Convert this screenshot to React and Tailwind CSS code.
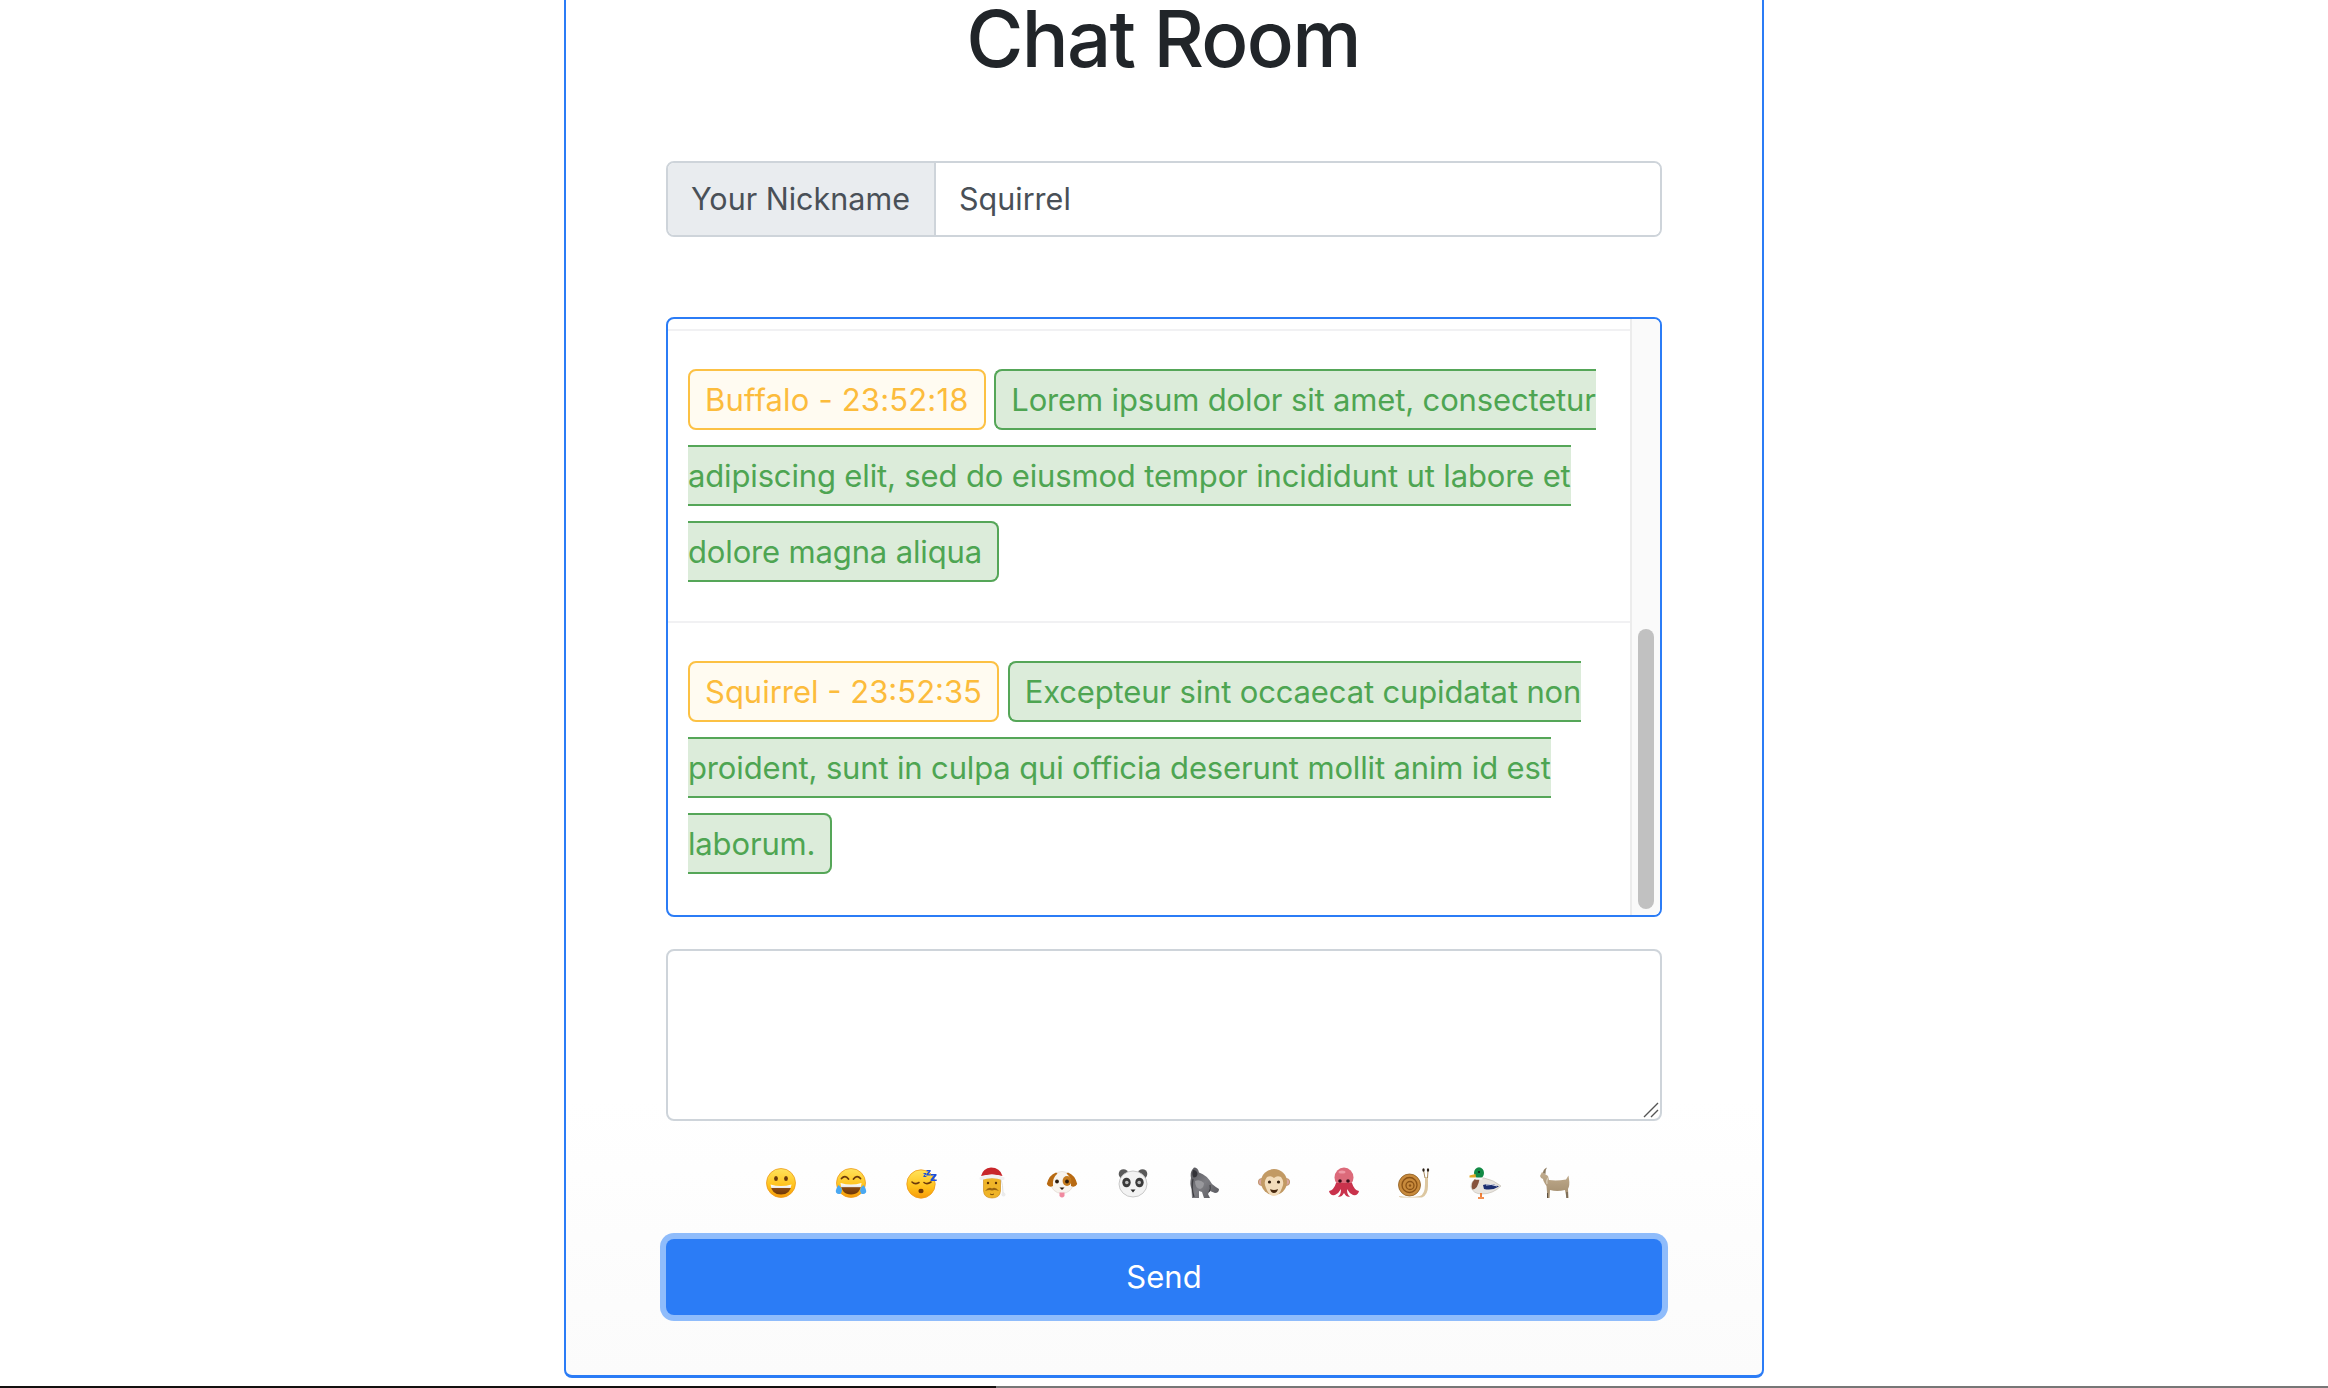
const fontStack = { fontFamily: 'Inter, "Noto Sans", sans-serif' };

function Defs() {
  return (
    <svg width="0" height="0" className="absolute">
      <defs>
        <linearGradient id="face" x1="0" y1="0" x2="0" y2="1">
          <stop offset="0" stopColor="#ffe35c" />
          <stop offset="0.6" stopColor="#ffc21c" />
          <stop offset="1" stopColor="#f79a09" />
        </linearGradient>
        <linearGradient id="mouth" x1="0" y1="0" x2="0" y2="1">
          <stop offset="0" stopColor="#fff" />
          <stop offset="0.35" stopColor="#e8e8e8" />
          <stop offset="0.4" stopColor="#8a4a12" />
          <stop offset="1" stopColor="#6e3708" />
        </linearGradient>
        <linearGradient id="fur" x1="0" y1="0" x2="1" y2="1">
          <stop offset="0" stopColor="#55555a" />
          <stop offset="0.5" stopColor="#7d7d82" />
          <stop offset="1" stopColor="#55555a" />
        </linearGradient>
        <linearGradient id="goat" x1="0" y1="0" x2="0" y2="1">
          <stop offset="0" stopColor="#c2ad8f" />
          <stop offset="1" stopColor="#a08b6c" />
        </linearGradient>
      </defs>
    </svg>
  );
}

const Grin = () => (
  <>
    <circle cx="16" cy="16" r="14.5" fill="url(#face)" stroke="#ee9a1c" strokeWidth="0.8" />
    <ellipse cx="11" cy="11.5" rx="1.9" ry="2.6" fill="#6b3a0c" />
    <ellipse cx="21" cy="11.5" rx="1.9" ry="2.6" fill="#6b3a0c" />
    <path d="M5.5 17.5Q16 20.5 26.5 17.5Q25.5 27.5 16 27.5Q6.5 27.5 5.5 17.5Z" fill="url(#mouth)" />
  </>
);

const Joy = () => (
  <>
    <circle cx="16" cy="16" r="14.5" fill="url(#face)" stroke="#ee9a1c" strokeWidth="0.8" />
    <path d="M6.5 11.5Q10 7.5 13.5 12M18.5 12Q22 7.5 25.5 11.5" fill="none" stroke="#6b3a0c" strokeWidth="1.8" strokeLinecap="round" />
    <path d="M5.5 16Q16 19 26.5 16Q25.5 27.5 16 27.5Q6.5 27.5 5.5 16Z" fill="url(#mouth)" />
    <path d="M3.5 18Q0 23 1 25.5Q3 28 6 26.5Q7.5 24 6.5 21Z" fill="#4aa8f2" />
    <path d="M28.5 18Q32 23 31 25.5Q29 28 26 26.5Q24.5 24 25.5 21Z" fill="#4aa8f2" />
  </>
);

const Sleep = () => (
  <>
    <circle cx="15" cy="17" r="14.2" fill="url(#face)" stroke="#ee9a1c" strokeWidth="0.8" />
    <path d="M6 15Q9 18 13 15.5M18 15.5Q21 18 25 15" fill="none" stroke="#6b3a0c" strokeWidth="1.6" strokeLinecap="round" />
    <ellipse cx="15" cy="24" rx="2.6" ry="2.2" fill="#6e3708" />
    <path d="M25 7h5.5v1.4l-3.2 4h3.4V14H24.6v-1.4l3.2-4H25Z" fill="#1d4fd8" />
    <path d="M20.5 3h4.2v1.2l-2.4 3h2.5V8.5h-4.5V7.3l2.4-3h-2.2Z" fill="#1d4fd8" />
    <path d="M17.5 6h2.8v.9l-1.6 2h1.7V10h-3v-.9l1.6-2h-1.5Z" fill="#1d4fd8" />
  </>
);

const Santa = () => (
  <>
    <path d="M7.5 11H24.5V24Q24 31 16 31Q8 31 7.5 24Z" fill="#efb428" stroke="#c9860e" strokeWidth="0.6" />
    <path d="M5 9Q7 1 15 0.5Q24 0.5 26.5 9Q16 6 5 9Z" fill="#c8262a" />
    <circle cx="27.5" cy="27.5" r="2" fill="#ececec" />
    <path d="M25 12Q27 18 27 26" fill="none" stroke="#d8d8d8" strokeWidth="0.8" />
    <path d="M3.5 10.5Q16 4.5 28.5 10.5Q29 13.5 26.5 13Q16 9.5 5.5 13Q3 13.5 3.5 10.5Z" fill="#f1f1f1" />
    <circle cx="12" cy="16" r="1.2" fill="#5c3208" />
    <circle cx="20" cy="16" r="1.2" fill="#5c3208" />
    <path d="M9 24Q13 19 16 21.5Q19 19 23 24Q19 22.5 16 23.5Q13 22.5 9 24Z" fill="#9a6510" />
    <path d="M14 27Q16 28.5 18 27" fill="none" stroke="#7d4f0b" strokeWidth="1" />
  </>
);

const Dog = () => (
  <>
    <ellipse cx="16" cy="15.5" rx="11.5" ry="11" fill="#f7f3ee" stroke="#d8cfc5" strokeWidth="0.5" />
    <path d="M10 5.5Q3 8 0.8 17Q3 21 7 19Q6 11 11.5 6.5Z" fill="#b86a12" />
    <path d="M22 5.5Q29 8 31.2 17Q29 21 25 19Q26 11 20.5 6.5Z" fill="#b86a12" />
    <ellipse cx="21" cy="14" rx="4.4" ry="5" fill="#c47a1d" />
    <circle cx="21" cy="14.5" r="1.9" fill="#2d1b0c" />
    <circle cx="11" cy="14.5" r="1.9" fill="#2d1b0c" />
    <path d="M13.5 20.5h5L16 23Z" fill="#2d1b0c" />
    <path d="M13.5 25.5h5V29Q16 32 13.5 29Z" fill="#f08aa0" />
  </>
);

const Panda = () => (
  <>
    <circle cx="6.5" cy="7" r="4.8" fill="#5a5a5a" />
    <circle cx="25.5" cy="7" r="4.8" fill="#5a5a5a" />
    <ellipse cx="16" cy="17" rx="14" ry="13" fill="#f3f3f3" stroke="#bdbdbd" strokeWidth="0.8" />
    <ellipse cx="9.5" cy="15.5" rx="4.2" ry="4.8" fill="#3a3a3a" />
    <ellipse cx="22.5" cy="15.5" rx="4.2" ry="4.8" fill="#3a3a3a" />
    <circle cx="9.8" cy="15.5" r="1.8" fill="#bdbdbd" />
    <circle cx="22.2" cy="15.5" r="1.8" fill="#bdbdbd" />
    <path d="M13.5 22.5h5L16 25.5Z" fill="#2a2a2a" />
  </>
);

const Gorilla = () => (
  <>
    <path d="M7 0.5Q11 0.5 12 5.5Q20 8 25 17Q28 19.5 32 22Q32 26 28 26L23 24L21 27L23 31H17L15 25L12 24L12 31H5L4.5 22Q2.5 17 4 11Q3 6 5 3Z" fill="url(#fur)" />
    <path d="M6 3Q10 3 10.5 7Q10 10.5 6.5 10.5Q4.5 7 6 3Z" fill="#333338" />
    <path d="M8 14Q13 12 17 16Q17 21 13 22Q8 21 8 14Z" fill="#98989c" />
    <path d="M6 12Q4 20 7 30" fill="none" stroke="#3d3d41" strokeWidth="1.2" />
    <path d="M23 18Q24 22 22 25" fill="none" stroke="#3d3d41" strokeWidth="1" />
  </>
);

const Monkey = () => (
  <>
    <circle cx="3.8" cy="15" r="3.5" fill="#d9a8a0" stroke="#b88a58" strokeWidth="0.8" />
    <circle cx="28.2" cy="15" r="3.5" fill="#d9a8a0" stroke="#b88a58" strokeWidth="0.8" />
    <ellipse cx="16" cy="15" rx="13" ry="13" fill="#c29a64" />
    <path d="M9 10Q13 8 16 11Q19 8 23 10Q27 15 24 21Q21 29 16 29Q11 29 8 21Q5 15 9 10Z" fill="#f2dcbb" />
    <circle cx="11.5" cy="15" r="1.6" fill="#2e1c0c" />
    <circle cx="20.5" cy="15" r="1.6" fill="#2e1c0c" />
    <path d="M12 22Q16 24 20 22Q19 26 16 26Q13 26 12 22Z" fill="#4a2a10" />
  </>
);

const Octopus = () => (
  <>
    <ellipse cx="16" cy="10.5" rx="9.5" ry="10" fill="#dc6a7a" />
    <path d="M8 16Q6 23 1 24Q2 29 7 28Q11 26 13 22Q13 28 10 29.5Q13 31 16 26Q19 31 22 29.5Q19 28 19 22Q21 26 25 28Q30 29 31 24Q26 23 24 16Z" fill="#c9324c" />
    <circle cx="12" cy="14" r="1.8" fill="#3b0f1a" />
    <circle cx="20" cy="14" r="1.8" fill="#3b0f1a" />
    <ellipse cx="14" cy="5" rx="3.5" ry="1.6" fill="#ee98a4" />
  </>
);

const Snail = () => (
  <>
    <path d="M1 29Q12 31 22 29Q27 27 27 17V10H30V19Q30 28 24 30.5H5Q1 30.5 1 29Z" fill="#dcc7a1" />
    <circle cx="11.5" cy="18" r="11" fill="#c88a3c" stroke="#8a5a1e" strokeWidth="0.8" />
    <circle cx="11.5" cy="18" r="7.5" fill="none" stroke="#8a5216" strokeWidth="1.3" />
    <circle cx="12" cy="18.5" r="4" fill="none" stroke="#8a5216" strokeWidth="1.3" />
    <circle cx="12" cy="18.5" r="1.2" fill="#8a5216" />
    <path d="M27 11L25.5 3M29.5 11L30 3" stroke="#a68a5e" strokeWidth="1" />
    <ellipse cx="25.5" cy="3" rx="1.2" ry="1.7" fill="#2b2118" />
    <ellipse cx="30" cy="3" rx="1.2" ry="1.7" fill="#2b2118" />
  </>
);

const Duck = () => (
  <>
    <path d="M8 11Q2 14 2 20Q4 27 13 27Q24 27 32 19Q25 13 15 11Z" fill="#e8e4de" stroke="#b5aea3" strokeWidth="0.5" />
    <path d="M6 12Q1 17 3.5 22.5Q9 22 10.5 12Z" fill="#86533c" />
    <path d="M14 18Q22 15.5 30 19.5Q23 24 15 22Z" fill="#1c2e70" />
    <path d="M17 18Q22 16.5 28 19" stroke="#fff" strokeWidth="0.9" fill="none" />
    <ellipse cx="10" cy="6" rx="5" ry="5.8" fill="#128a45" />
    <path d="M6.5 7L0.5 8.5V10.5L7 10.5Z" fill="#e2a928" />
    <circle cx="10" cy="5" r="0.9" fill="#111" />
    <rect x="6" y="10.5" width="7.5" height="2.2" rx="1" fill="#f6f6f6" />
    <path d="M12 26V30M9 31H15" stroke="#ee6c1a" strokeWidth="1.7" />
  </>
);

const Goat = () => (
  <>
    <path d="M1 9L3 5L6 7L9 9L10 13Q18 14 27 12.5L29.5 8.5L30 12Q31 18 29 22L29.5 31H27.5L26 23Q18 25 11 23L10.5 31H8.5L7.5 19Q4 14 4 12Q2 12 1 9Z" fill="url(#goat)" />
    <path d="M4 6Q4 2 8 0.5Q6 3 6.5 7Z" fill="#8c7a60" />
    <path d="M8.5 26V31M28 25V31" stroke="#5d5142" strokeWidth="1" />
    <path d="M8 17Q7 14 9 11" stroke="#d5c8b2" strokeWidth="1.4" fill="none" />
  </>
);

const emojis = [
  ["grinning face", Grin],
  ["laughing with tears", Joy],
  ["sleeping face", Sleep],
  ["santa", Santa],
  ["dog", Dog],
  ["panda", Panda],
  ["gorilla", Gorilla],
  ["monkey", Monkey],
  ["octopus", Octopus],
  ["snail", Snail],
  ["duck", Duck],
  ["goat", Goat],
];

function Message({ who, whoClass, children }) {
  return (
    <div className="border-t-2 border-[#f1f1f3] pl-[20px] pt-[31px] pb-[31px] whitespace-nowrap text-[31px] leading-[76px]">
      <span className={`rounded-lg border-2 border-[#fcc144] bg-[#fffbf1] px-[15px] py-[10px] text-[#fcbc3c] ${whoClass}`}>
        {who}
      </span>{" "}
      <span className="rounded-lg border-2 border-[#55a658] bg-[#dcecda] px-[15px] py-[10px] tracking-[-0.15px] text-[#4ea552]">
        {children}
      </span>
    </div>
  );
}

export default function App() {
  return (
    <div style={fontStack} className="flex h-[1388px] w-[2328px] flex-col overflow-hidden bg-white">
      <Defs />
      <div className="mx-auto flex h-[1378px] w-[1200px] shrink-0 flex-col rounded-b-lg border-x-2 border-b-[3px] border-[#2b7cf6] bg-gradient-to-b from-white from-80% to-[#fbfbfb] px-[100px]">
        <h1 className="h-[76px] pr-[2px] text-center text-[78px] font-medium leading-[78px] tracking-[-1.7px] text-[#212529]">Chat Room</h1>

        <div className="mt-[85px] flex h-[76px] overflow-hidden rounded-lg border-2 border-[#ced4da] text-[30.5px] text-[#495057]">
          <span className="flex w-[268px] items-center border-r-2 border-[#ced4da] bg-[#e9ecef] pl-[23px]">Your Nickname</span>
          <span className="flex flex-1 items-center bg-white pl-[23px]">Squirrel</span>
        </div>

        <div className="mt-[80px] flex h-[600px] overflow-hidden rounded-lg border-2 border-[#2b7cf6] bg-white">
          <div className="flex-1 overflow-hidden pt-[10px]">
            <Message who="Buffalo - 23:52:18" whoClass="tracking-[0.17px]">
              Lorem ipsum dolor sit amet, consectetur<br />
              adipiscing elit, sed do eiusmod tempor incididunt ut labore et<br />
              dolore magna aliqua
            </Message>
            <Message who="Squirrel - 23:52:35" whoClass="tracking-normal">
              Excepteur sint occaecat cupidatat non<br />
              proident, sunt in culpa qui officia deserunt mollit anim id est<br />
              laborum.
            </Message>
          </div>
          <div className="w-[30px] shrink-0 border-l-2 border-[#ececec] bg-[#fafafa] pl-[6px] pt-[310px]">
            <div className="h-[280px] w-4 rounded-full bg-[#c1c1c1]" />
          </div>
        </div>

        <div className="relative mt-[32px] h-[172px]">
          <textarea className="block h-full w-full resize-none rounded-lg border-2 border-[#ced4da] bg-white outline-none" />
          <svg className="absolute bottom-[3px] right-[3px]" width="16" height="16" viewBox="0 0 16 16">
            <path d="M1 15L15 1M8 15L15 8" stroke="#555" strokeWidth="1.4" fill="none" />
          </svg>
        </div>

        <div className="mt-[46px] flex justify-center gap-[38.4px] pl-[8px]">
          {emojis.map(([label, Icon]) => (
            <svg key={label} aria-label={label} width="32" height="32" viewBox="0 0 32 32">
              <Icon />
            </svg>
          ))}
        </div>

        <button className="mt-[40px] h-[76px] w-full rounded-lg bg-[#2b7cf6] text-[31px] text-white ring-[6px] ring-[#8fbcfb]">
          Send
        </button>
      </div>

      <div className="mt-auto flex h-[2px] shrink-0">
        <div className="w-[996px] bg-[#141110]" />
        <div className="flex-1 bg-[#777777]" />
      </div>
    </div>
  );
}
